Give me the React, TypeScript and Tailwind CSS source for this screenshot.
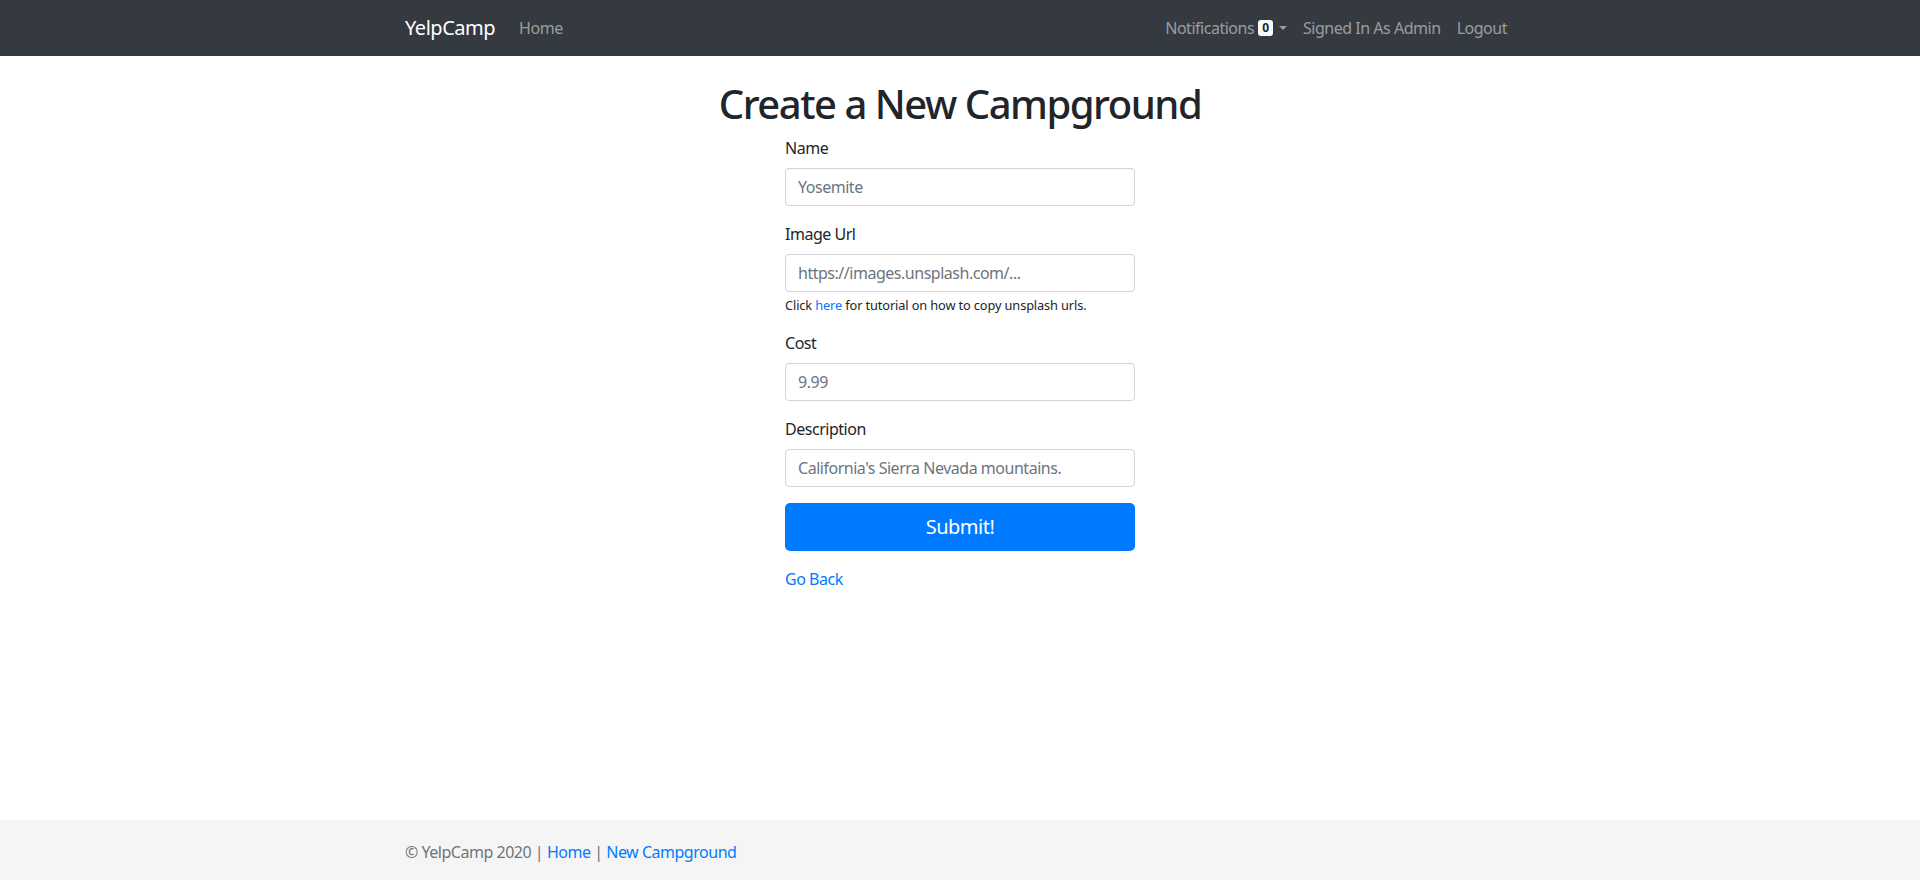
const font = { fontFamily: '"Noto Sans", "Open Sans", sans-serif' };

function Field({ label, placeholder, help }: { label: string; placeholder: string; help?: boolean }) {
  return (
    <div className="mb-4">
      <label className="mb-2 block text-base leading-6 text-[#212529]">{label}</label>
      <input
        type="text"
        placeholder={placeholder}
        className="block h-[38px] w-full rounded border border-[#ced4da] bg-white px-3 text-base tracking-[-0.03em] text-[#495057] placeholder:text-[#6c757d] focus:outline-none"
      />
      {help && (
        <small className="mt-1 mb-[1px] block text-[12.8px] leading-[19.2px] tracking-[-0.01em] text-[#212529]">
          Click <a href="#" className="text-[#007bff]">here</a> for tutorial on how to copy unsplash urls.
        </small>
      )}
    </div>
  );
}

export default function App() {
  return (
    <div className="flex min-h-screen flex-col bg-white tracking-[-0.03em] text-[#212529]" style={font}>
      <nav className="h-14 bg-[#343a40]">
        <div className="mx-auto flex h-full w-[1140px] items-center px-[15px]">
          <a href="#" className="mr-4 text-xl leading-[30px] text-white">YelpCamp</a>
          <a href="#" className="px-2 text-base text-white/50">Home</a>
          <div className="ml-auto flex items-center">
            <a href="#" className="flex items-center px-2 text-base text-white/50">
              Notifications
              <span className="ml-1 inline-flex h-4 items-center rounded-[3px] bg-[#f8f9fa] px-[4px] text-xs font-bold leading-none tracking-normal text-[#212529]">
                0
              </span>
              <span className="ml-[6px] inline-block h-0 w-0 border-x-[4.5px] border-t-[4.5px] border-x-transparent border-t-white/50" />
            </a>
            <a href="#" className="px-2 text-base text-white/50">Signed In As Admin</a>
            <a href="#" className="px-2 text-base text-white/50">Logout</a>
          </div>
        </div>
      </nav>

      <main className="flex-1">
        <h1 className="mt-6 mb-2 text-center text-[40px] font-medium leading-[48px] tracking-[-0.037em] text-[#212529]">
          Create a New Campground
        </h1>
        <form className="mx-auto w-[350px]">
          <Field label="Name" placeholder="Yosemite" />
          <Field label="Image Url" placeholder="https://images.unsplash.com/..." help />
          <Field label="Cost" placeholder="9.99" />
          <Field label="Description" placeholder="California's Sierra Nevada mountains." />
          <button
            type="button"
            className="mb-4 block h-12 w-full rounded-[5px] bg-[#007bff] text-xl text-white"
          >
            Submit!
          </button>
          <a href="#" className="text-base leading-6 text-[#007bff]">Go Back</a>
        </form>
      </main>

      <footer className="h-[60px] bg-[#f5f5f5]">
        <div className="mx-auto w-[1140px] px-[15px] pt-[2px] text-base leading-[60px] text-[#6c757d]">
          © YelpCamp 2020 | <a href="#" className="text-[#007bff]">Home</a> |{' '}
          <a href="#" className="text-[#007bff]">New Campground</a>
        </div>
      </footer>
    </div>
  );
}
